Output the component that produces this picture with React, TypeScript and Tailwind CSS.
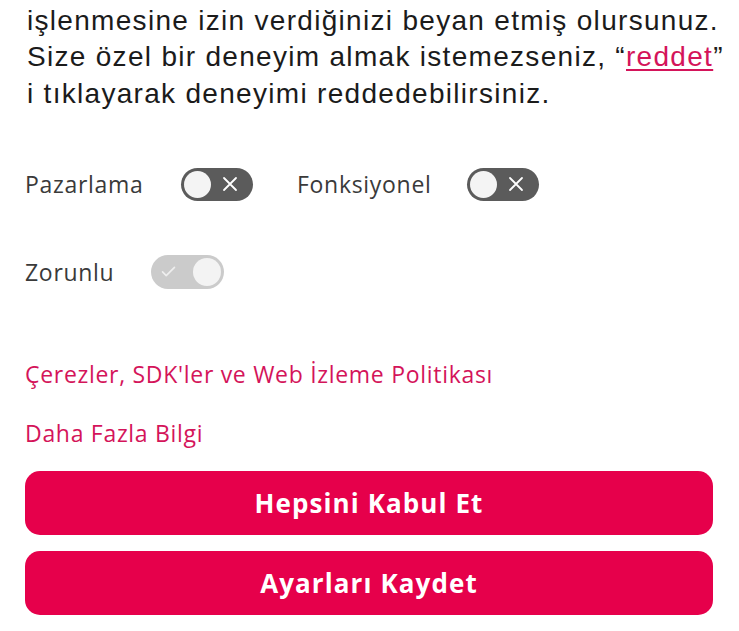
const sans = { fontFamily: '"Open Sans", "Noto Sans", sans-serif' };

function OffToggle() {
  return (
    <div className="flex h-[33px] w-[72px] shrink-0 items-center rounded-full bg-[#5b5b5b] px-[3px]">
      <div className="h-[27px] w-[27px] rounded-full bg-[#f4f4f4]" />
      <svg viewBox="0 0 16 16" className="ml-[11px] h-[16px] w-[16px]" fill="none" stroke="#ffffff" strokeWidth={1.8} strokeLinecap="round">
        <path d="M2 2l12 12M14 2L2 14" />
      </svg>
    </div>
  );
}

function LockedOnToggle() {
  return (
    <div className="flex h-[34px] w-[73px] shrink-0 items-center justify-between rounded-full bg-[#cbcbcb] pl-[10px] pr-[3px]">
      <svg viewBox="0 0 16 12" className="h-[11px] w-[15px]" fill="none" stroke="#eeeeee" strokeWidth={1.8} strokeLinecap="round" strokeLinejoin="round">
        <path d="M1.5 6.5l4 4L14.5 1.5" />
      </svg>
      <div className="h-[28px] w-[28px] rounded-full bg-[#f3f3f3]" />
    </div>
  );
}

export default function App() {
  return (
    <div className="h-[631px] w-[739px] overflow-hidden bg-white">
      <div className="flex flex-col px-[25px]">
        <p
          className="-mt-[34px] whitespace-nowrap pl-[2px] text-[28px] leading-[36.5px] tracking-[1.3px] text-[#1b1b1b]"
          style={{ fontFamily: '"Liberation Sans", Arial, sans-serif' }}
        >
          yapıyor, çerezler aracılığıyla topladığımız verilerin
          <br />
          işlenmesine izin verdiğinizi beyan etmiş olursunuz.
          <br />
          Size özel bir deneyim almak istemezseniz, “
          <a className="text-[#d4145a] underline underline-offset-[3px]">reddet</a>”
          <br />i tıklayarak deneyimi reddedebilirsiniz.
        </p>

        <div className="mt-[55px] flex items-center text-[23px] tracking-[0.7px] text-[#3a3a3a]" style={sans}>
          <span className="w-[156px]">Pazarlama</span>
          <OffToggle />
          <span className="ml-[44px] w-[170px]">Fonksiyonel</span>
          <OffToggle />
        </div>

        <div className="mt-[53px] flex items-center text-[23px] tracking-[0.7px] text-[#3a3a3a]" style={sans}>
          <span className="w-[126px]">Zorunlu</span>
          <LockedOnToggle />
        </div>

        <div
          className="mt-[70px] flex flex-col gap-[29px] text-[23px] leading-[30px] tracking-[0.7px] text-[#d4145a]"
          style={sans}
        >
          <a>Çerezler, SDK'ler ve Web İzleme Politikası</a>
          <a>Daha Fazla Bilgi</a>
        </div>

        <div className="mt-[23px] flex flex-col gap-[16px]" style={sans}>
          <button className="h-[64px] w-[688px] rounded-[15px] bg-[#e6004b] text-[26px] font-bold tracking-[1.1px] text-white">
            Hepsini Kabul Et
          </button>
          <button className="h-[64px] w-[688px] rounded-[15px] bg-[#e6004b] text-[26px] font-bold tracking-[1.1px] text-white">
            Ayarları Kaydet
          </button>
        </div>
      </div>
    </div>
  );
}
